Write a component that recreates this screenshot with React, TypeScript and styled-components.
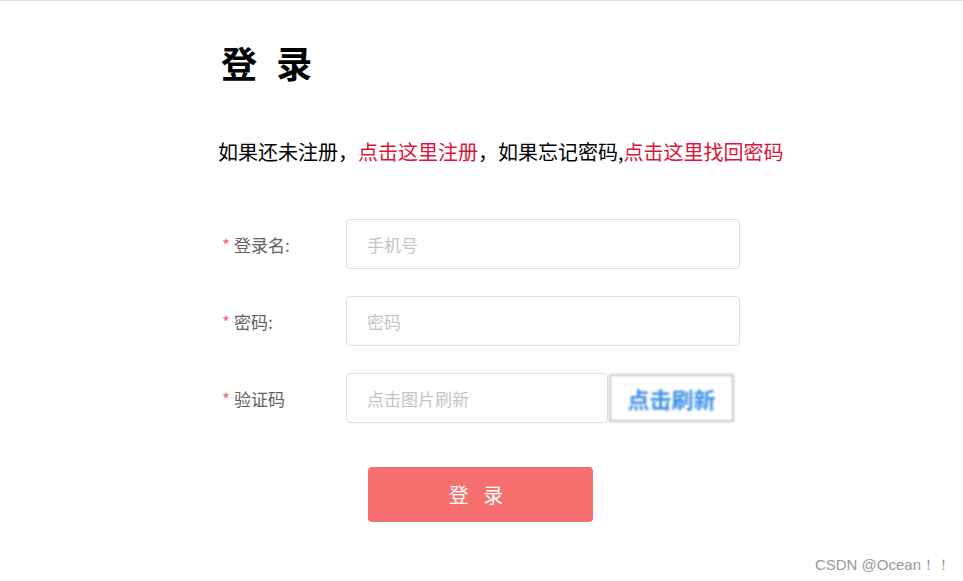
import styled, { createGlobalStyle } from 'styled-components'

const GlobalStyle = createGlobalStyle`
  html, body {
    margin: 0;
    padding: 0;
    background: #fff;
    font-family: "Noto Sans CJK SC", "Noto Sans", sans-serif;
  }
`

const Pagina = styled.div`
  position: relative;
  width: 963px;
  height: 581px;
  border-top: 1px solid #e4e4e4;
  box-sizing: border-box;
  overflow: hidden;
`

const Conteudo = styled.div`
  width: 522px;
  margin-left: 218px;
  padding-top: 36px;
`

const Titulo = styled.h1`
  margin: 0 0 0 3px;
  font-size: 36px;
  font-weight: 700;
  line-height: 50px;
  word-spacing: 11px;
  color: #000;
`

const Aviso = styled.p`
  margin: 50px 0 0;
  font-size: 20px;
  line-height: 30px;
  color: #000;
  white-space: nowrap;
`

const Link = styled.a`
  color: #dc143c;
  text-decoration: none;
  cursor: pointer;
`

const Formulario = styled.form`
  margin-top: 52px;
  display: flex;
  flex-direction: column;
  gap: 27px;
`

const Linha = styled.div`
  display: flex;
  align-items: center;
  height: 50px;
`

const Rotulo = styled.label`
  width: 128px;
  padding-left: 4px;
  box-sizing: border-box;
  font-size: 17px;
  color: #606266;

  &::before {
    content: '*';
    color: #f56c6c;
    margin-right: 4px;
  }
`

const Entrada = styled.input<{ $largura?: number }>`
  width: ${(p) => p.$largura ?? 394}px;
  height: 50px;
  box-sizing: border-box;
  padding: 0 20px;
  border: 1px solid #dcdfe6;
  border-radius: 4px;
  font-family: inherit;
  font-size: 17px;
  color: #606266;
  outline: none;

  &::placeholder {
    color: #c0c4cc;
  }
`

const Captcha = styled.div`
  margin-left: 1px;
  width: 125px;
  height: 48px;
  box-sizing: border-box;
  border: 2px solid #c6c6c6;
  display: flex;
  align-items: center;
  justify-content: center;
  font-size: 22px;
  font-weight: 600;
  color: #3a8ee6;
  filter: blur(0.8px);
  cursor: pointer;
`

const Acoes = styled.div`
  display: flex;
  justify-content: center;
  margin-top: 17px;
  padding-left: 2px;
`

const BotaoEntrar = styled.button`
  width: 225px;
  height: 55px;
  padding: 0 8px 0 0;
  border: none;
  border-radius: 4px;
  background: #f56f6f;
  color: #fff;
  font-family: inherit;
  font-size: 20px;
  word-spacing: 10px;
  cursor: pointer;
`

const MarcaDagua = styled.div`
  position: absolute;
  right: 12px;
  bottom: 6px;
  font-family: "Liberation Sans", Arial, sans-serif;
  font-size: 15px;
  color: #999;
`

const App = () => {
  return (
    <Pagina>
      <GlobalStyle />
      <Conteudo>
        <Titulo>登 录</Titulo>
        <Aviso>
          如果还未注册，<Link>点击这里注册</Link>，如果忘记密码,
          <Link>点击这里找回密码</Link>
        </Aviso>
        <Formulario onSubmit={(e) => e.preventDefault()}>
          <Linha>
            <Rotulo htmlFor="login">登录名:</Rotulo>
            <Entrada id="login" type="text" placeholder="手机号" />
          </Linha>
          <Linha>
            <Rotulo htmlFor="senha">密码:</Rotulo>
            <Entrada id="senha" type="password" placeholder="密码" />
          </Linha>
          <Linha>
            <Rotulo htmlFor="codigo">验证码</Rotulo>
            <Entrada id="codigo" type="text" placeholder="点击图片刷新" $largura={262} />
            <Captcha>点击刷新</Captcha>
          </Linha>
          <Acoes>
            <BotaoEntrar type="submit">登 录</BotaoEntrar>
          </Acoes>
        </Formulario>
      </Conteudo>
      <MarcaDagua>CSDN @Ocean！！</MarcaDagua>
    </Pagina>
  )
}

export default App
